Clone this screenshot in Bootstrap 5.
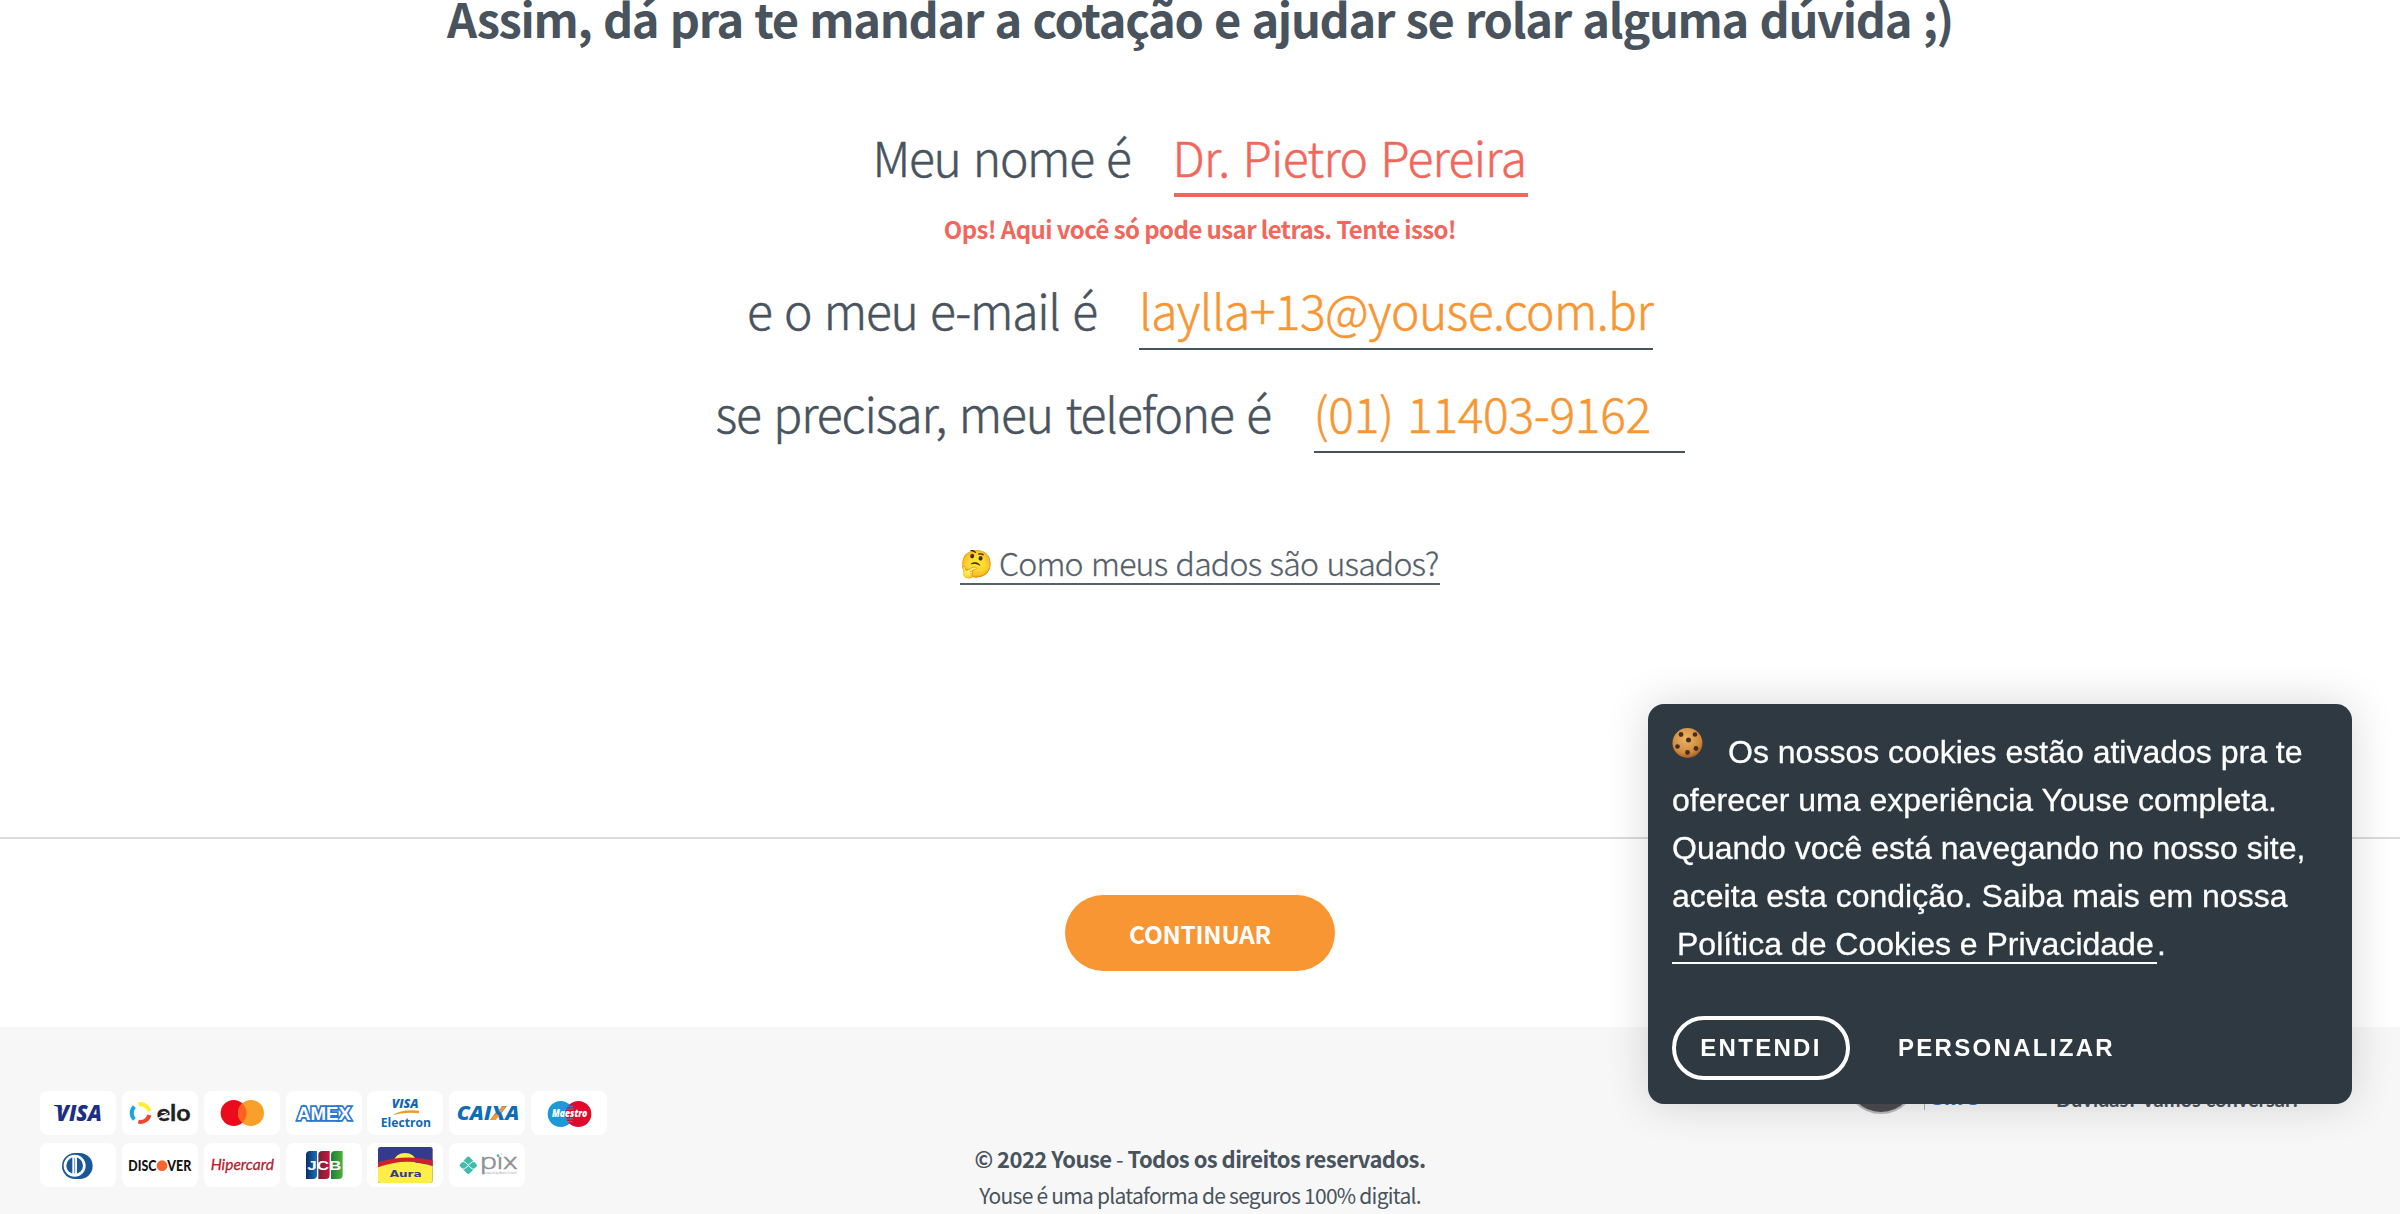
<!DOCTYPE html>
<html lang="pt-BR">
<head>
<meta charset="utf-8">
<title>Youse - Cotação</title>
<link rel="stylesheet" href="https://cdn.jsdelivr.net/npm/bootstrap@5.3.0/dist/css/bootstrap.min.css">
<script src="https://cdn.jsdelivr.net/npm/bootstrap@5.3.0/dist/js/bootstrap.bundle.min.js"></script>
<style>
body{font-family:"Noto Sans CJK JP","Noto Sans",sans-serif;color:#48535d;background:#fff;height:1214px;overflow:hidden}
.quote-main{height:837px}
.quote-title{font-size:47px;line-height:59px;font-weight:700;letter-spacing:-1.3px;word-spacing:2px;margin:-12px 0 80px}
.phrase{font-size:48px;line-height:58px;font-weight:300;word-spacing:3px;-webkit-text-stroke:.5px currentColor}
.field{color:#f79633;border-bottom:2px solid #48535d;height:70px}
.field-error{color:#f1675c;border-bottom:4px solid #f1675c}
.lbl-name{width:301px;letter-spacing:-1.3px}.lbl-mail{width:392px;letter-spacing:-1.2px}.lbl-phone{width:598px;letter-spacing:-1.1px}
.fld-name{width:354px;letter-spacing:-.72px;text-indent:-1px}.fld-mail{width:514px;letter-spacing:-.6px}.fld-phone{width:371px;letter-spacing:-.33px}
.mt-mail{margin-top:35px}.mt-phone{margin-top:33px}
.error-text{color:#f1675c;font-size:24px;line-height:28px;font-weight:700;letter-spacing:-.6px;margin:18px 0 2px}
.data-link{width:480px;height:43px;margin-top:89px;font-size:32px;line-height:40px;font-weight:300;letter-spacing:-.8px;word-spacing:2px;-webkit-text-stroke:.3px currentColor;border-bottom:2px solid #55606a;color:#55606a}
.data-link .emoji{flex:none;font-size:26.500px;line-height:43px;width:39px;font-family:"Noto Color Emoji",sans-serif}
.action-bar{height:190px;border-top:2px solid #d9dadb;padding-top:56px}
.btn-go{width:270px;height:76px;background:#f79633;color:#fff;font-size:24.500px;font-weight:700;letter-spacing:-.3px;line-height:75px}
.btn-go:hover{background:#f79633;color:#fff}
.foot{height:187px;background:#f7f7f7}
.cards{padding:64px 0 0 40px;gap:8px 5.85px;width:620px;font-family:"Open Sans",sans-serif}
.pay{width:76px;height:44px;border-radius:8px;background:#fff}
.pay svg{display:block;width:76px;height:44px}
.legal{padding-top:113px;line-height:37px}
.legal-b{font-weight:700;font-size:22px;letter-spacing:-.54px}
.legal-r{font-weight:400;font-size:21px;letter-spacing:-.75px}
.seals{padding:15px 0 0 245px}
.seal-ball{width:72px;height:72px;border-radius:50%;background:#4c4c50;border:2px solid #b9b9be}
.seal-tag{margin:10px 0 0 7px;height:58px;width:60px;border-left:1px solid #aab0b8;padding:33px 0 0 4px;font:italic 700 23px/23px "Open Sans",sans-serif;color:#2a72c0}
.chat{font:700 20px/30px "Lato",sans-serif;padding-top:42px;margin-left:72px}
.cookie-box{position:fixed;left:1648px;top:704px;width:704px;height:400px;background:#2f3942;border-radius:16px;box-shadow:0 0 44px rgba(0,0,0,.16);padding:24px;color:#fff;font-family:"Liberation Sans",Arial,sans-serif}
.cookie-text{font-size:32px;line-height:48px;-webkit-text-stroke:.3px #fff}
.cookie-svg{width:32px;height:32px;margin-right:24px;vertical-align:3px}
.cookie-link{display:inline-block;width:485px;padding-left:5px;height:44px;border-bottom:2px solid #fff;color:#fff}
.cookie-btn{height:64px;font-size:24px;font-weight:700;letter-spacing:2.3px}
.btn-ok{width:178px;border:4px solid #fff;border-radius:32px}
</style>
</head>
<body>
<main class="quote-main d-flex flex-column align-items-center">
  <h1 class="quote-title text-nowrap">Assim, dá pra te mandar a cotação e ajudar se rolar alguma dúvida ;)</h1>
  <div class="phrase d-flex text-nowrap"><div class="lbl-name">Meu nome é</div><div class="field field-error fld-name">Dr. Pietro Pereira</div></div>
  <div class="error-text text-nowrap">Ops! Aqui você só pode usar letras. Tente isso!</div>
  <div class="phrase d-flex text-nowrap mt-mail"><div class="lbl-mail">e o meu e-mail é</div><div class="field fld-mail">laylla+13@youse.com.br</div></div>
  <div class="phrase d-flex text-nowrap mt-phone"><div class="lbl-phone">se precisar, meu telefone é</div><div class="field fld-phone">(01) 11403-9162</div></div>
  <a class="data-link d-flex text-nowrap text-decoration-none" href="#"><span class="emoji">🤔</span><span>Como meus dados são usados?</span></a>
</main>
<section class="action-bar text-center">
  <button class="btn-go btn rounded-pill border-0 p-0" type="button">CONTINUAR</button>
</section>
<footer class="foot row g-0">
  <div class="col-4"><div class="cards d-flex flex-wrap">
    <div class="pay"><svg viewBox="0 0 228 132"><text x="48" y="90" font-size="66" font-weight="800" font-style="italic" fill="#1c2f86" textLength="138" lengthAdjust="spacingAndGlyphs">VISA</text><path d="M42 42h20l7 18c-6-9-14-14-27-16z" fill="#1c2f86"/></svg></div>
    <div class="pay"><svg viewBox="0 0 228 132"><g fill="none" stroke-width="12"><path d="M50 40A27 27 0 0 1 82 61" stroke="#ffee2a"/><path d="M37 85A27 27 0 0 1 37 47" stroke="#1ba5df"/><path d="M82 72A27 27 0 0 1 49 92" stroke="#ef4533"/></g><text x="104" y="89" font-family="Lato" font-size="68" font-weight="700" fill="#222" stroke="#222" textLength="102" lengthAdjust="spacingAndGlyphs">elo</text><path d="M104 84l34-17M178 62l14 12" stroke="#fff" stroke-width="4"/></svg></div>
    <div class="pay"><svg viewBox="0 0 228 132"><circle cx="89" cy="66" r="39" fill="#ec0b1c"/><circle cx="141" cy="66" r="39" fill="#f9a02a"/><path d="M115 37a39 39 0 0 1 0 58a39 39 0 0 1 0-58z" fill="#ff5f1f"/></svg></div>
    <div class="pay"><svg viewBox="0 0 228 132"><text x="33" y="86" font-family="Liberation Sans" font-size="54" font-weight="700" fill="#fff" stroke="#2b76cf" stroke-width="10" paint-order="stroke" textLength="162" lengthAdjust="spacingAndGlyphs">AMEX</text></svg></div>
    <div class="pay"><svg viewBox="0 0 228 132"><text x="74" y="52" font-size="39" font-weight="800" font-style="italic" fill="#1268b3" textLength="81" lengthAdjust="spacingAndGlyphs">VISA</text><path d="M76 73Q104 54 156 59V67Q112 61 76 73z" fill="#f39a2b"/><text x="41" y="108" font-size="37" font-weight="700" fill="#1268b3" textLength="151" lengthAdjust="spacingAndGlyphs">Electron</text></svg></div>
    <div class="pay"><svg viewBox="0 0 228 132"><text x="23" y="87" font-size="58" font-weight="800" font-style="italic" fill="#0f6cb6" textLength="188" lengthAdjust="spacingAndGlyphs">CAIXA</text><path d="M122 87L141 67L150 74L140 87zM150 60L158 46H172L156 66z" fill="#f79a2b"/></svg></div>
    <div class="pay"><svg viewBox="0 0 228 132"><circle cx="89" cy="69" r="39" fill="#1a9bd8"/><circle cx="142" cy="69" r="39" fill="#e20a2c"/><path d="M106 46h20M104 54h24M103 84h24M105 92h20" stroke="#1a9bd8" stroke-width="3"/><text x="63" y="78" font-size="29" font-weight="800" font-style="italic" fill="#fff" textLength="106" lengthAdjust="spacingAndGlyphs">Maestro</text></svg></div>
    <div class="pay"><svg viewBox="0 0 228 132"><path d="M105 30h14a39 39 0 0 1 0 78h-14a39 39 0 0 1 0-78z" fill="#19569b"/><circle cx="104" cy="68" r="33" fill="#fff"/><circle cx="104" cy="68" r="25" fill="#19569b"/><path d="M104 42v52" stroke="#fff" stroke-width="14"/><path d="M104 45v46" stroke="#19569b" stroke-width="2"/></svg></div>
    <div class="pay"><svg viewBox="0 0 228 132" font-family="Lato" font-weight="900" font-size="47" fill="#111"><text x="19" y="84" textLength="84" lengthAdjust="spacingAndGlyphs">DISC</text><circle cx="120" cy="68" r="16" fill="#fb6330"/><text x="136" y="84" textLength="72" lengthAdjust="spacingAndGlyphs">VER</text></svg></div>
    <div class="pay"><svg viewBox="0 0 228 132"><text x="20" y="81" font-family="Lato" font-size="48" font-weight="400" font-style="italic" fill="#b3202b" stroke="#b3202b" stroke-width=".8" textLength="190" lengthAdjust="spacingAndGlyphs">Hipercard</text></svg></div>
    <div class="pay"><svg viewBox="0 0 228 132"><defs><linearGradient id="jb"><stop stop-color="#0d2d6b"/><stop offset="1" stop-color="#1673b8"/></linearGradient><linearGradient id="jr"><stop stop-color="#6c2434"/><stop offset="1" stop-color="#cf1440"/></linearGradient><linearGradient id="jg"><stop stop-color="#1b7f3a"/><stop offset="1" stop-color="#4fb03a"/></linearGradient></defs><path d="M60 36q0-12 12-12h21v72q0 12-12 12H60z" fill="url(#jb)"/><path d="M97 36q0-12 12-12h22v72q0 12-12 12H97z" fill="url(#jr)"/><path d="M135 36q0-12 12-12h23v72q0 12-12 12H135z" fill="url(#jg)"/><text x="64" y="81" font-family="Liberation Sans" font-size="38" font-weight="700" fill="#fff" textLength="102" lengthAdjust="spacingAndGlyphs">JCB</text></svg></div>
    <div class="pay"><svg viewBox="0 0 228 132"><rect x="33" y="12" width="164" height="108" rx="7" fill="#343a8c"/><ellipse cx="114" cy="54" rx="32" ry="24" fill="#ffee45"/><path d="M33 69Q114 45 197 69V113a7 7 0 0 1-7 7H40a7 7 0 0 1-7-7z" fill="#ffee45"/><path d="M33 58Q114 32 197 52V68Q114 42 33 73z" fill="#cf202f"/><text x="68" y="101" font-family="DejaVu Sans" font-size="27" font-weight="700" fill="#343a8c" textLength="96" lengthAdjust="spacingAndGlyphs">Aura</text></svg></div>
    <div class="pay"><svg viewBox="0 0 228 132"><rect x="38" y="47" width="40" height="40" rx="6" transform="rotate(45 58 67)" fill="#3fbdac"/><path d="M34 55Q46 52 58 66Q70 52 82 55M34 79Q46 82 58 68Q70 82 82 79" fill="none" stroke="#fff" stroke-width="3"/><text x="93" y="79" font-size="66" font-weight="300" fill="#8f9296" stroke="#8f9296" stroke-width="2" textLength="112" lengthAdjust="spacingAndGlyphs">pix</text><path d="M140 26h16v14h-16z" fill="#fff"/><circle cx="147" cy="38" r="4" fill="#3fbdac"/><text x="106" y="92" font-size="8" fill="#999" textLength="96">powered by Banco Central</text></svg></div>
  </div></div>
  <div class="col-4 text-center legal text-nowrap">
    <div class="legal-b">© 2022 Youse <span class="fw-normal">-</span> Todos os direitos reservados.</div>
    <div class="legal-r">Youse é uma plataforma de seguros 100% digital.</div>
  </div>
  <div class="col-4"><div class="seals d-flex">
    <div class="seal-ball"></div><div class="seal-tag">GMC</div>
    <div class="chat text-nowrap">Dúvidas? Vamos conversar!</div>
  </div></div>
</footer>
<aside class="cookie-box d-flex flex-column">
  <div class="cookie-text text-nowrap">
    <svg class="cookie-svg" viewBox="0 0 32 32"><defs><radialGradient id="ck" cx=".45" cy=".35" r=".7"><stop stop-color="#eab56b"/><stop offset=".7" stop-color="#cf8a3c"/><stop offset="1" stop-color="#935320"/></radialGradient></defs><circle cx="15.500" cy="15" r="15" fill="url(#ck)"/><g fill="#4a2b1f"><circle cx="9" cy="6.500" r="2.400"/><circle cx="23" cy="6.500" r="2.300"/><circle cx="16.500" cy="12" r="2.500"/><circle cx="5.500" cy="18.500" r="2.300"/><circle cx="24" cy="20.500" r="2.400"/><circle cx="15.500" cy="24.500" r="2.400"/></g></svg>Os nossos cookies estão ativados pra te<br>oferecer uma experiência Youse completa.<br>Quando você está navegando no nosso site,<br>aceita esta condição. Saiba mais em nossa<br><a class="cookie-link text-decoration-none" href="#">Política de Cookies e Privacidade</a>.
  </div>
  <div class="d-flex mt-auto">
    <button class="btn-ok cookie-btn btn text-white p-0" type="button">ENTENDI</button>
    <button class="cookie-btn btn text-white border-0 p-0 ms-5" type="button">PERSONALIZAR</button>
  </div>
</aside>
</body>
</html>
